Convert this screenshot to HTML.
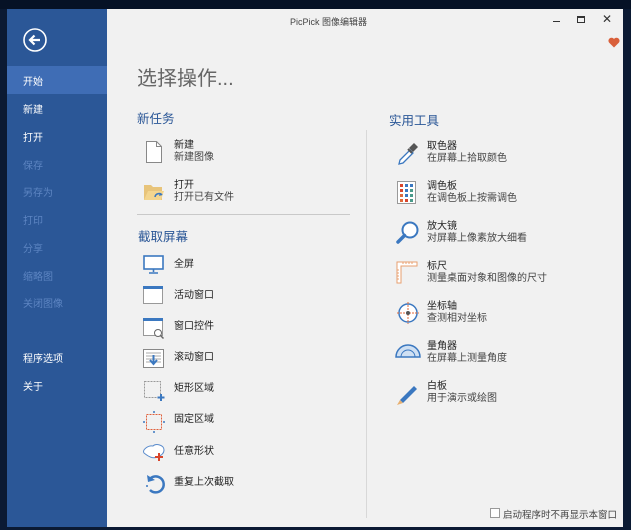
<!DOCTYPE html>
<html><head><meta charset="utf-8"><style>
*{margin:0;padding:0;box-sizing:border-box}
body{width:631px;height:530px;overflow:hidden;background:#0b1a33;font-family:"Liberation Sans","Noto Sans CJK SC",sans-serif;position:relative}
.a{position:absolute;white-space:nowrap}
#side{left:7px;top:9px;width:100px;height:518px;background:#2b5797}
#main{left:107px;top:9px;width:516px;height:518px;background:#f1f1f1}
.nav{left:23px;font-size:10px;color:#fff}
.dim{color:#5d85c2}
.t{font-size:10px;color:#222;line-height:12px}
.s{font-size:10px;color:#444;line-height:12px}
.h{font-size:12.5px;color:#2b5797}
</style></head><body>
<div class="a" style="left:0;top:0;width:631px;height:9px;background:#061226"></div>
<div class="a" id="side"></div>
<div class="a" style="left:7px;top:66px;width:100px;height:28px;background:#3f6db5"></div>
<svg class="a" style="left:23px;top:28px" width="24" height="24"><circle cx="12" cy="12" r="11" fill="none" stroke="#fff" stroke-width="1.6"/><path d="M17 12H7M11.5 7.5L7 12l4.5 4.5" stroke="#fff" stroke-width="2.2" fill="none"/></svg>
<div class="a nav" style="top:73px">开始</div>
<div class="a nav" style="top:101px">新建</div>
<div class="a nav" style="top:129px">打开</div>
<div class="a nav dim" style="top:157px">保存</div>
<div class="a nav dim" style="top:184px">另存为</div>
<div class="a nav dim" style="top:212px">打印</div>
<div class="a nav dim" style="top:240px">分享</div>
<div class="a nav dim" style="top:268px">缩略图</div>
<div class="a nav dim" style="top:295px">关闭图像</div>
<div class="a nav" style="top:350px">程序选项</div>
<div class="a nav" style="top:378px">关于</div>

<div class="a" id="main"></div>
<div class="a" style="left:290px;top:15px;font-size:9px;color:#444">PicPick 图像编辑器</div>
<div class="a" style="left:553px;top:21px;width:7px;height:1px;background:#333"></div>
<div class="a" style="left:577px;top:16px;width:8px;height:7px;border:1px solid #333;border-top-width:2px"></div>
<div class="a" style="left:602px;top:12px;font-size:12px;color:#333">✕</div>
<svg class="a" style="left:608px;top:37px" width="12" height="11"><path d="M6 10.5L1 5.5A2.6 2.6 0 0 1 6 2a2.6 2.6 0 0 1 5 3.5z" fill="#d9603b"/></svg>
<div class="a" style="left:137px;top:62px;font-size:20px;color:#666">选择操作...</div>

<div class="a h" style="left:137px;top:108px">新任务</div>
<svg class="a" style="left:146px;top:141px" width="16" height="22"><path d="M.5 .5h10l5 5v16H.5z" fill="#fff" stroke="#888"/><path d="M10.5 .5v5h5" fill="none" stroke="#888"/></svg>
<div class="a t" style="left:174px;top:140px">新建</div><div class="a s" style="left:174px;top:152px">新建图像</div>
<svg class="a" style="left:143px;top:182px" width="22" height="20"><path d="M1 3h7l2 2h9v13H1z" fill="#e8c47a"/><path d="M1 18l4-9h16l-3 9z" fill="#f3d58f"/><path d="M12 15a4 4 0 0 1 7-2" stroke="#3b78c0" stroke-width="1.6" fill="none"/><path d="M17 11l2 2-3 1" fill="#3b78c0"/></svg>
<div class="a t" style="left:174px;top:180px">打开</div><div class="a s" style="left:174px;top:192px">打开已有文件</div>
<div class="a" style="left:137px;top:214px;width:213px;height:1px;background:#c9c9c9"></div>

<div class="a h" style="left:138px;top:226px">截取屏幕</div>
<svg class="a" style="left:143px;top:255px" width="22" height="20"><rect x="1" y="1" width="19" height="13" fill="#fff" stroke="#3b78c0" stroke-width="1.6"/><path d="M10.5 14v3M6 18h9" stroke="#3b78c0" stroke-width="1.6"/></svg>
<div class="a t" style="left:174px;top:259px">全屏</div>
<svg class="a" style="left:143px;top:286px" width="22" height="20"><rect x=".5" y=".5" width="19" height="17" fill="#fff" stroke="#999"/><rect x="0" y="0" width="20" height="3" fill="#3b78c0"/></svg>
<div class="a t" style="left:174px;top:290px">活动窗口</div>
<svg class="a" style="left:143px;top:318px" width="24" height="22"><rect x=".5" y=".5" width="19" height="17" fill="#fff" stroke="#999"/><rect x="0" y="0" width="20" height="3" fill="#3b78c0"/><circle cx="15" cy="15" r="3.5" fill="#fff" stroke="#666"/><path d="M17.5 17.5l3 3" stroke="#666" stroke-width="1.5"/></svg>
<div class="a t" style="left:174px;top:321px">窗口控件</div>
<svg class="a" style="left:143px;top:349px" width="22" height="20"><rect x=".5" y=".5" width="20" height="18" fill="#fff" stroke="#888"/><path d="M3 4h15M3 7h15M3 10h15M3 13h15" stroke="#aaa"/><path d="M10.5 6v8M7 11l3.5 4 3.5-4" stroke="#3b78c0" stroke-width="2" fill="none"/></svg>
<div class="a t" style="left:174px;top:352px">滚动窗口</div>
<svg class="a" style="left:144px;top:381px" width="22" height="20"><rect x=".5" y=".5" width="16" height="16" fill="none" stroke="#999" stroke-dasharray="2 1"/><path d="M17 13v7M13.5 16.5h7" stroke="#3b78c0" stroke-width="2"/></svg>
<div class="a t" style="left:174px;top:383px">矩形区域</div>
<svg class="a" style="left:143px;top:411px" width="22" height="22"><rect x="3.5" y="3.5" width="15" height="15" fill="none" stroke="#e0603b" stroke-dasharray="2 1"/><path d="M11 0v2M11 20v2M0 11h2M20 11h2" stroke="#3b78c0" stroke-width="1.5"/></svg>
<div class="a t" style="left:174px;top:414px">固定区域</div>
<svg class="a" style="left:142px;top:442px" width="24" height="20"><path d="M2 11c-2-3 4-8 9-7 3-3 11-1 11 4 0 4-4 6-7 7-4 2-8 0-13-4z" fill="#fff" stroke="#5b8ccc"/><path d="M17 11v8M13 15h8" stroke="#d9452b" stroke-width="2"/></svg>
<div class="a t" style="left:174px;top:446px">任意形状</div>
<svg class="a" style="left:144px;top:472px" width="22" height="22"><path d="M5 8A8 8 0 1 1 6 18" stroke="#3b78c0" stroke-width="2.5" fill="none"/><path d="M3 3l1 7 7-2z" fill="#3b78c0"/><circle cx="3" cy="14" r="1" fill="#3b78c0"/></svg>
<div class="a t" style="left:174px;top:477px">重复上次截取</div>

<div class="a" style="left:366px;top:130px;width:1px;height:388px;background:#d8d8d8"></div>

<div class="a h" style="left:389px;top:110px">实用工具</div>
<svg class="a" style="left:396px;top:141px" width="24" height="26"><path d="M3 23l1-4 10-10 3 3-10 10z" fill="#fff" stroke="#3b78c0" stroke-width="1.3"/><path d="M13 7l5-5 4 4-5 5z" fill="#555"/><path d="M12 8l4 4" stroke="#555" stroke-width="2"/></svg>
<div class="a t" style="left:427px;top:141px">取色器</div><div class="a s" style="left:427px;top:153px">在屏幕上拾取颜色</div>
<svg class="a" style="left:397px;top:181px" width="20" height="24"><rect x=".5" y=".5" width="18" height="22" fill="#fff" stroke="#999"/><g><rect x="3" y="3" width="3" height="3" fill="#d9452b"/><rect x="8" y="3" width="3" height="3" fill="#3b78c0"/><rect x="13" y="3" width="3" height="3" fill="#3b78c0"/><rect x="3" y="8" width="3" height="3" fill="#d9452b"/><rect x="8" y="8" width="3" height="3" fill="#3b78c0"/><rect x="13" y="8" width="3" height="3" fill="#4a9a8a"/><rect x="3" y="13" width="3" height="3" fill="#e06a3b"/><rect x="8" y="13" width="3" height="3" fill="#3b78c0"/><rect x="13" y="13" width="3" height="3" fill="#4a9a8a"/><rect x="3" y="18" width="3" height="3" fill="#e06a3b"/><rect x="8" y="18" width="3" height="3" fill="#d9452b"/><rect x="13" y="18" width="3" height="3" fill="#4a9a8a"/></g></svg>
<div class="a t" style="left:427px;top:181px">调色板</div><div class="a s" style="left:427px;top:193px">在调色板上按需调色</div>
<svg class="a" style="left:396px;top:221px" width="24" height="24"><circle cx="14" cy="9" r="7.5" fill="#fff" stroke="#3b78c0" stroke-width="2"/><path d="M8.5 14.5L2 21" stroke="#3b78c0" stroke-width="3.5" stroke-linecap="round"/></svg>
<div class="a t" style="left:427px;top:221px">放大镜</div><div class="a s" style="left:427px;top:233px">对屏幕上像素放大细看</div>
<svg class="a" style="left:396px;top:261px" width="24" height="24"><path d="M1 1h20v4H5v17H1z" fill="#fff" stroke="#e8a070"/><path d="M7 1v2M10 1v2M13 1v2M16 1v2M1 9h2M1 12h2M1 15h2M1 18h2" stroke="#e8a070"/></svg>
<div class="a t" style="left:427px;top:261px">标尺</div><div class="a s" style="left:427px;top:273px">测量桌面对象和图像的尺寸</div>
<svg class="a" style="left:396px;top:301px" width="24" height="24"><circle cx="12" cy="12" r="9" fill="#fff" stroke="#3b78c0" stroke-width="1.5"/><path d="M12 1v22M1 12h22" stroke="#e06a3b" stroke-dasharray="2 1"/><circle cx="12" cy="12" r="2" fill="#555"/></svg>
<div class="a t" style="left:427px;top:301px">坐标轴</div><div class="a s" style="left:427px;top:313px">查测相对坐标</div>
<svg class="a" style="left:395px;top:343px" width="26" height="16"><path d="M1 14a12 12 0 0 1 24 0z" fill="#cfe0f3" stroke="#3b78c0" stroke-width="1.5"/><path d="M6 14a7 7 0 0 1 14 0" fill="none" stroke="#3b78c0"/></svg>
<div class="a t" style="left:427px;top:341px">量角器</div><div class="a s" style="left:427px;top:353px">在屏幕上测量角度</div>
<svg class="a" style="left:395px;top:381px" width="26" height="26"><path d="M5 19L19 5l3 3L8 22z" fill="#3b78c0"/><path d="M5 19l-3 5 6-2z" fill="#e8b070"/></svg>
<div class="a t" style="left:427px;top:381px">白板</div><div class="a s" style="left:427px;top:393px">用于演示或绘图</div>

<div class="a" style="left:490px;top:508px;width:10px;height:10px;border:1px solid #999;background:#fff"></div>
<div class="a" style="left:503px;top:507px;font-size:9.5px;color:#444">启动程序时不再显示本窗口</div>
</body></html>
